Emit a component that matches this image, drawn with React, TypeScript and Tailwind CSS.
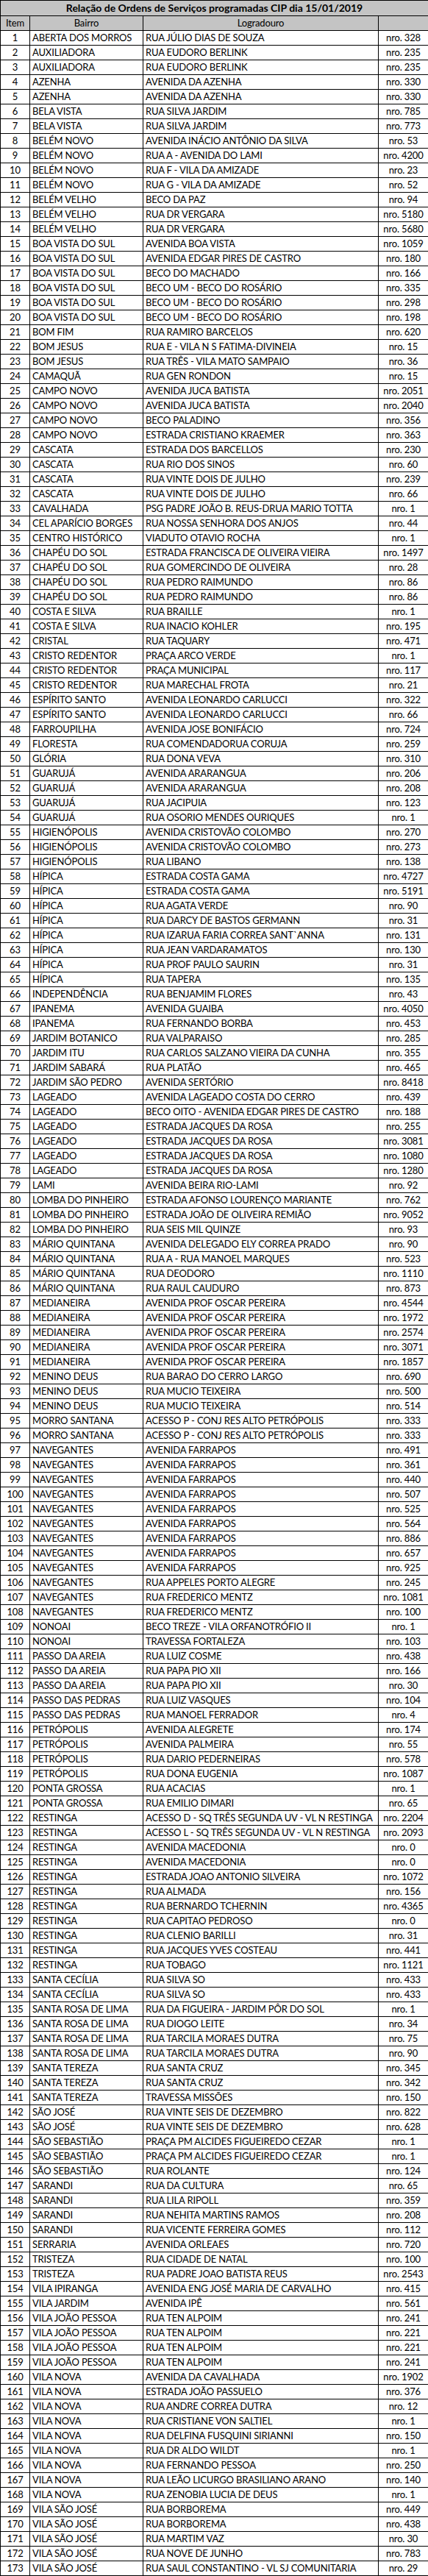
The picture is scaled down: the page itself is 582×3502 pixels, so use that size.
const raw = `ABERTA DOS MORROS|RUA JÚLIO DIAS DE SOUZA|328
AUXILIADORA|RUA EUDORO BERLINK|235
AUXILIADORA|RUA EUDORO BERLINK|235
AZENHA|AVENIDA DA AZENHA|330
AZENHA|AVENIDA DA AZENHA|330
BELA VISTA|RUA SILVA JARDIM|785
BELA VISTA|RUA SILVA JARDIM|773
BELÉM NOVO|AVENIDA INÁCIO ANTÔNIO DA SILVA|53
BELÉM NOVO|RUA A - AVENIDA DO LAMI|4200
BELÉM NOVO|RUA F - VILA DA AMIZADE|23
BELÉM NOVO|RUA G - VILA DA AMIZADE|52
BELÉM VELHO|BECO DA PAZ|94
BELÉM VELHO|RUA DR VERGARA|5180
BELÉM VELHO|RUA DR VERGARA|5680
BOA VISTA DO SUL|AVENIDA BOA VISTA|1059
BOA VISTA DO SUL|AVENIDA EDGAR PIRES DE CASTRO|180
BOA VISTA DO SUL|BECO DO MACHADO|166
BOA VISTA DO SUL|BECO UM - BECO DO ROSÁRIO|335
BOA VISTA DO SUL|BECO UM - BECO DO ROSÁRIO|298
BOA VISTA DO SUL|BECO UM - BECO DO ROSÁRIO|198
BOM FIM|RUA RAMIRO BARCELOS|620
BOM JESUS|RUA E - VILA N S FATIMA-DIVINEIA|15
BOM JESUS|RUA TRÊS - VILA MATO SAMPAIO|36
CAMAQUÃ|RUA GEN RONDON|15
CAMPO NOVO|AVENIDA JUCA BATISTA|2051
CAMPO NOVO|AVENIDA JUCA BATISTA|2040
CAMPO NOVO|BECO PALADINO|356
CAMPO NOVO|ESTRADA CRISTIANO KRAEMER|363
CASCATA|ESTRADA DOS BARCELLOS|230
CASCATA|RUA RIO DOS SINOS|60
CASCATA|RUA VINTE DOIS DE JULHO|239
CASCATA|RUA VINTE DOIS DE JULHO|66
CAVALHADA|PSG PADRE JOÃO B. REUS-DRUA MARIO TOTTA|1
CEL APARÍCIO BORGES|RUA NOSSA SENHORA DOS ANJOS|44
CENTRO HISTÓRICO|VIADUTO OTAVIO ROCHA|1
CHAPÉU DO SOL|ESTRADA FRANCISCA DE OLIVEIRA VIEIRA|1497
CHAPÉU DO SOL|RUA GOMERCINDO DE OLIVEIRA|28
CHAPÉU DO SOL|RUA PEDRO RAIMUNDO|86
CHAPÉU DO SOL|RUA PEDRO RAIMUNDO|86
COSTA E SILVA|RUA BRAILLE|1
COSTA E SILVA|RUA INACIO KOHLER|195
CRISTAL|RUA TAQUARY|471
CRISTO REDENTOR|PRAÇA ARCO VERDE|1
CRISTO REDENTOR|PRAÇA MUNICIPAL|117
CRISTO REDENTOR|RUA MARECHAL FROTA|21
ESPÍRITO SANTO|AVENIDA LEONARDO CARLUCCI|322
ESPÍRITO SANTO|AVENIDA LEONARDO CARLUCCI|66
FARROUPILHA|AVENIDA JOSE BONIFÁCIO|724
FLORESTA|RUA COMENDADORUA CORUJA|259
GLÓRIA|RUA DONA VEVA|310
GUARUJÁ|AVENIDA ARARANGUA|206
GUARUJÁ|AVENIDA ARARANGUA|208
GUARUJÁ|RUA JACIPUIA|123
GUARUJÁ|RUA OSORIO MENDES OURIQUES|1
HIGIENÓPOLIS|AVENIDA CRISTOVÃO COLOMBO|270
HIGIENÓPOLIS|AVENIDA CRISTOVÃO COLOMBO|273
HIGIENÓPOLIS|RUA LIBANO|138
HÍPICA|ESTRADA COSTA GAMA|4727
HÍPICA|ESTRADA COSTA GAMA|5191
HÍPICA|RUA AGATA VERDE|90
HÍPICA|RUA DARCY DE BASTOS GERMANN|31
HÍPICA|RUA IZARUA FARIA CORREA SANT\`ANNA|131
HÍPICA|RUA JEAN VARDARAMATOS|130
HÍPICA|RUA PROF PAULO SAURIN|31
HÍPICA|RUA TAPERA|135
INDEPENDÊNCIA|RUA BENJAMIM FLORES|43
IPANEMA|AVENIDA GUAIBA|4050
IPANEMA|RUA FERNANDO BORBA|453
JARDIM BOTANICO|RUA VALPARAISO|285
JARDIM ITU|RUA CARLOS SALZANO VIEIRA DA CUNHA|355
JARDIM SABARÁ|RUA PLATÃO|465
JARDIM SÃO PEDRO|AVENIDA SERTÓRIO|8418
LAGEADO|AVENIDA LAGEADO COSTA DO CERRO|439
LAGEADO|BECO OITO - AVENIDA EDGAR PIRES DE CASTRO|188
LAGEADO|ESTRADA JACQUES DA ROSA|255
LAGEADO|ESTRADA JACQUES DA ROSA|3081
LAGEADO|ESTRADA JACQUES DA ROSA|1080
LAGEADO|ESTRADA JACQUES DA ROSA|1280
LAMI|AVENIDA BEIRA RIO-LAMI|92
LOMBA DO PINHEIRO|ESTRADA AFONSO LOURENÇO MARIANTE|762
LOMBA DO PINHEIRO|ESTRADA JOÃO DE OLIVEIRA REMIÃO|9052
LOMBA DO PINHEIRO|RUA SEIS MIL QUINZE|93
MÁRIO QUINTANA|AVENIDA DELEGADO ELY CORREA PRADO|90
MÁRIO QUINTANA|RUA A - RUA MANOEL MARQUES|523
MÁRIO QUINTANA|RUA DEODORO|1110
MÁRIO QUINTANA|RUA RAUL CAUDURO|873
MEDIANEIRA|AVENIDA PROF OSCAR PEREIRA|4544
MEDIANEIRA|AVENIDA PROF OSCAR PEREIRA|1972
MEDIANEIRA|AVENIDA PROF OSCAR PEREIRA|2574
MEDIANEIRA|AVENIDA PROF OSCAR PEREIRA|3071
MEDIANEIRA|AVENIDA PROF OSCAR PEREIRA|1857
MENINO DEUS|RUA BARAO DO CERRO LARGO|690
MENINO DEUS|RUA MUCIO TEIXEIRA|500
MENINO DEUS|RUA MUCIO TEIXEIRA|514
MORRO SANTANA|ACESSO P - CONJ RES ALTO PETRÓPOLIS|333
MORRO SANTANA|ACESSO P - CONJ RES ALTO PETRÓPOLIS|333
NAVEGANTES|AVENIDA FARRAPOS|491
NAVEGANTES|AVENIDA FARRAPOS|361
NAVEGANTES|AVENIDA FARRAPOS|440
NAVEGANTES|AVENIDA FARRAPOS|507
NAVEGANTES|AVENIDA FARRAPOS|525
NAVEGANTES|AVENIDA FARRAPOS|564
NAVEGANTES|AVENIDA FARRAPOS|886
NAVEGANTES|AVENIDA FARRAPOS|657
NAVEGANTES|AVENIDA FARRAPOS|925
NAVEGANTES|RUA APPELES PORTO ALEGRE|245
NAVEGANTES|RUA FREDERICO MENTZ|1081
NAVEGANTES|RUA FREDERICO MENTZ|100
NONOAI|BECO TREZE - VILA ORFANOTRÓFIO II|1
NONOAI|TRAVESSA FORTALEZA|103
PASSO DA AREIA|RUA LUIZ COSME|438
PASSO DA AREIA|RUA PAPA PIO XII|166
PASSO DA AREIA|RUA PAPA PIO XII|30
PASSO DAS PEDRAS|RUA LUIZ VASQUES|104
PASSO DAS PEDRAS|RUA MANOEL FERRADOR|4
PETRÓPOLIS|AVENIDA ALEGRETE|174
PETRÓPOLIS|AVENIDA PALMEIRA|55
PETRÓPOLIS|RUA DARIO PEDERNEIRAS|578
PETRÓPOLIS|RUA DONA EUGENIA|1087
PONTA GROSSA|RUA ACACIAS|1
PONTA GROSSA|RUA EMILIO DIMARI|65
RESTINGA|ACESSO D - SQ TRÊS SEGUNDA UV - VL N RESTINGA|2204
RESTINGA|ACESSO L - SQ TRÊS SEGUNDA UV - VL N RESTINGA|2093
RESTINGA|AVENIDA MACEDONIA|0
RESTINGA|AVENIDA MACEDONIA|0
RESTINGA|ESTRADA JOAO ANTONIO SILVEIRA|1072
RESTINGA|RUA ALMADA|156
RESTINGA|RUA BERNARDO TCHERNIN|4365
RESTINGA|RUA CAPITAO PEDROSO|0
RESTINGA|RUA CLENIO BARILLI|31
RESTINGA|RUA JACQUES YVES COSTEAU|441
RESTINGA|RUA TOBAGO|1121
SANTA CECÍLIA|RUA SILVA SO|433
SANTA CECÍLIA|RUA SILVA SO|433
SANTA ROSA DE LIMA|RUA DA FIGUEIRA - JARDIM PÔR DO SOL|1
SANTA ROSA DE LIMA|RUA DIOGO LEITE|34
SANTA ROSA DE LIMA|RUA TARCILA MORAES DUTRA|75
SANTA ROSA DE LIMA|RUA TARCILA MORAES DUTRA|90
SANTA TEREZA|RUA SANTA CRUZ|345
SANTA TEREZA|RUA SANTA CRUZ|342
SANTA TEREZA|TRAVESSA MISSÕES|150
SÃO JOSÉ|RUA VINTE SEIS DE DEZEMBRO|822
SÃO JOSÉ|RUA VINTE SEIS DE DEZEMBRO|628
SÃO SEBASTIÃO|PRAÇA PM ALCIDES FIGUEIREDO CEZAR|1
SÃO SEBASTIÃO|PRAÇA PM ALCIDES FIGUEIREDO CEZAR|1
SÃO SEBASTIÃO|RUA ROLANTE|124
SARANDI|RUA DA CULTURA|65
SARANDI|RUA LILA RIPOLL|359
SARANDI|RUA NEHITA MARTINS RAMOS|208
SARANDI|RUA VICENTE FERREIRA GOMES|112
SERRARIA|AVENIDA ORLEAES|720
TRISTEZA|RUA CIDADE DE NATAL|100
TRISTEZA|RUA PADRE JOAO BATISTA REUS|2543
VILA IPIRANGA|AVENIDA ENG JOSÉ MARIA DE CARVALHO|415
VILA JARDIM|AVENIDA IPÊ|561
VILA JOÃO PESSOA|RUA TEN ALPOIM|241
VILA JOÃO PESSOA|RUA TEN ALPOIM|221
VILA JOÃO PESSOA|RUA TEN ALPOIM|221
VILA JOÃO PESSOA|RUA TEN ALPOIM|241
VILA NOVA|AVENIDA DA CAVALHADA|1902
VILA NOVA|ESTRADA JOÃO PASSUELO|376
VILA NOVA|RUA ANDRE CORREA DUTRA|12
VILA NOVA|RUA CRISTIANE VON SALTIEL|1
VILA NOVA|RUA DELFINA FUSQUINI SIRIANNI|150
VILA NOVA|RUA DR ALDO WILDT|1
VILA NOVA|RUA FERNANDO PESSOA|250
VILA NOVA|RUA LEÃO LICURGO BRASILIANO ARANO|140
VILA NOVA|RUA ZENOBIA LUCIA DE DEUS|1
VILA SÃO JOSÉ|RUA BORBOREMA|449
VILA SÃO JOSÉ|RUA BORBOREMA|438
VILA SÃO JOSÉ|RUA MARTIM VAZ|30
VILA SÃO JOSÉ|RUA NOVE DE JUNHO|783
VILA SÃO JOSÉ|RUA SAUL CONSTANTINO - VL SJ COMUNITARIA|29`;

const rows = raw.split("\n").map((line) => {
  const [bairro, logradouro, nro] = line.split("|");
  return { bairro, logradouro, nro };
});

export default function App() {
  return (
    <div className="w-[582px] bg-white text-black [font-family:Lato,'Liberation_Sans',sans-serif] text-[13px] tracking-[-0.15px] leading-none">
      <table className="w-[582px] table-fixed border-collapse">
        <colgroup>
          <col className="w-[40px]" />
          <col className="w-[154px]" />
          <col className="w-[320px]" />
          <col className="w-[68px]" />
        </colgroup>
        <thead>
          <tr className="h-[21px] bg-[#c4c4c4]">
            <th colSpan={4} className="border border-black p-0 text-center font-bold text-[14px] tracking-normal">
              Relação de Ordens de Serviços programadas CIP dia 15/01/2019
            </th>
          </tr>
          <tr className="h-[20px] bg-[#c4c4c4]">
            <th className="border border-black p-0 text-center font-normal">Item</th>
            <th className="border border-black p-0 text-center font-normal">Bairro</th>
            <th className="border border-black p-0 text-center font-normal">Logradouro</th>
            <th className="border border-black p-0"></th>
          </tr>
        </thead>
        <tbody>
          {rows.map((r, i) => (
            <tr key={i} className="h-[20px]">
              <td className="border border-black p-0 text-center whitespace-nowrap">{i + 1}</td>
              <td className="border border-black p-0 pl-[3px] whitespace-nowrap overflow-hidden">{r.bairro}</td>
              <td className="border border-black p-0 pl-[3px] whitespace-nowrap overflow-hidden">{r.logradouro}</td>
              <td className="border border-black p-0 text-center whitespace-nowrap">nro. {r.nro}</td>
            </tr>
          ))}
        </tbody>
      </table>
    </div>
  );
}
